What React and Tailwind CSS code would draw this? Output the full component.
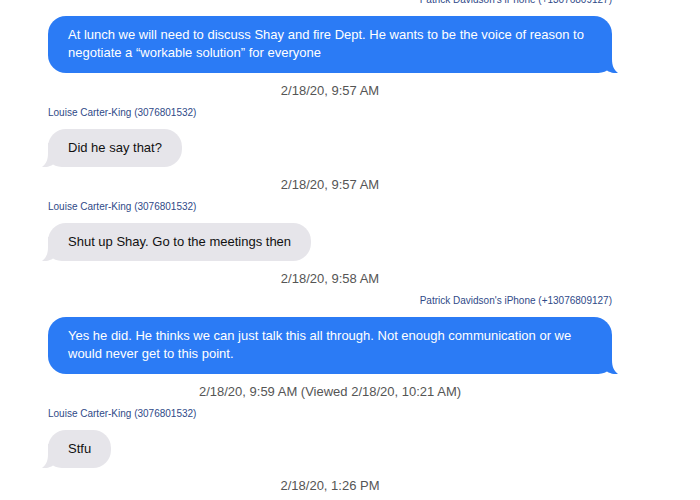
import React from 'react';

const messages = [
  { from: 'me', sender: "Patrick Davidson's iPhone (+13076809127)", text: 'At lunch we will need to discuss Shay and fire Dept. He wants to be the voice of reason to negotiate a “workable solution” for everyone', time: '2/18/20, 9:57 AM' },
  { from: 'them', sender: 'Louise Carter-King (3076801532)', text: 'Did he say that?', time: '2/18/20, 9:57 AM' },
  { from: 'them', sender: 'Louise Carter-King (3076801532)', text: 'Shut up Shay. Go to the meetings then', time: '2/18/20, 9:58 AM' },
  { from: 'me', sender: "Patrick Davidson's iPhone (+13076809127)", text: 'Yes he did. He thinks we can just talk this all through. Not enough communication or we would never get to this point.', time: '2/18/20, 9:59 AM (Viewed 2/18/20, 10:21 AM)' },
  { from: 'them', sender: 'Louise Carter-King (3076801532)', text: 'Stfu', time: '2/18/20, 1:26 PM' },
];

const Tail = ({ side, color }) =>
  side === 'right' ? (
    <svg className="absolute right-[-6px] bottom-0" width="24" height="24" viewBox="0 0 24 24">
      <path d="M0,0 H18 V10 C18,17 20,21 24,24 C20,24.5 16,23.5 13,21.5 C10,23.5 6,24 0,24 Z" fill={color} />
    </svg>
  ) : (
    <svg className="absolute left-[-6px] bottom-0" width="24" height="24" viewBox="0 0 24 24">
      <path d="M24,0 H6 V10 C6,17 4,21 0,24 C4,24.5 8,23.5 11,21.5 C14,23.5 18,24 24,24 Z" fill={color} />
    </svg>
  );

const Message = ({ msg }) => {
  const mine = msg.from === 'me';
  return (
    <div className={`flex flex-col ${mine ? 'items-end' : 'items-start'}`}>
      <div className="text-[10px] leading-[14px] text-[#2f4a88]">{msg.sender}</div>
      <div
        className={`relative mt-[9px] rounded-[18px] px-5 pt-[10px] text-[13px] leading-[18px] ${
          mine ? 'pb-[11px] bg-[#2b7bf5] text-white' : 'pb-[10px] bg-[#e6e5ea] text-[#111]'
        }`}
      >
        <Tail side={mine ? 'right' : 'left'} color={mine ? '#2b7bf5' : '#e6e5ea'} />
        <span className="relative">{msg.text}</span>
      </div>
      <div className="mt-[10px] mb-[7px] self-stretch text-center text-[13px] leading-[16px] text-[#555]">{msg.time}</div>
    </div>
  );
};

export default function App() {
  return (
    <div className="h-[500px] w-[700px] overflow-hidden bg-white" style={{ fontFamily: '"Liberation Sans", Arial, sans-serif' }}>
      <div className="mt-[-7px] ml-[48px] w-[564px]">
        {messages.map((m, i) => (
          <Message key={i} msg={m} />
        ))}
      </div>
    </div>
  );
}
